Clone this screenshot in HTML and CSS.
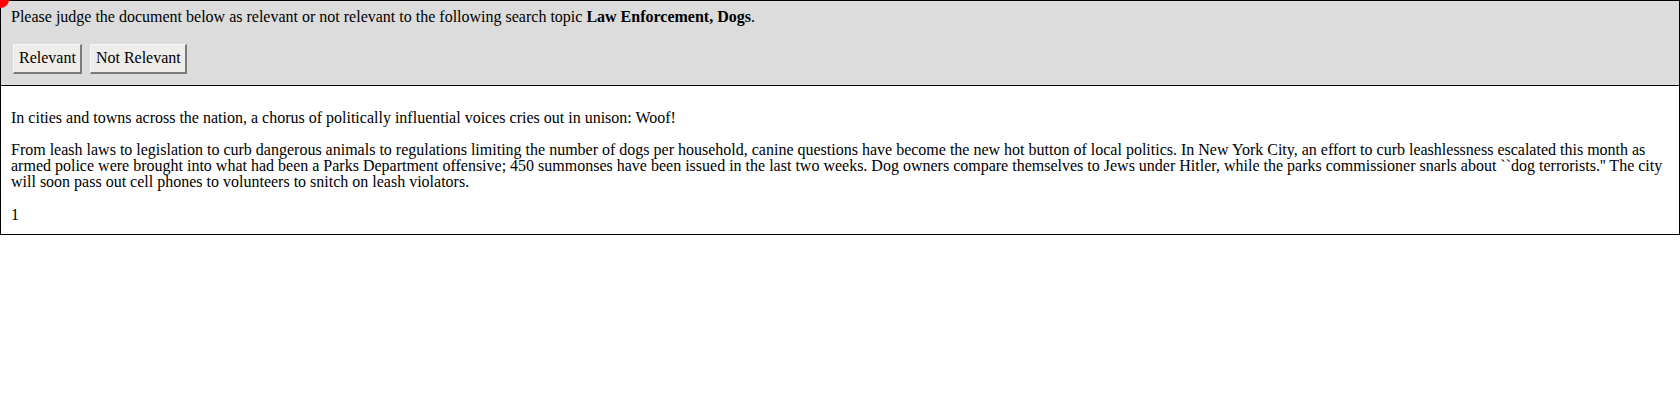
FILE: index.html
```html
<!DOCTYPE html>
<html>
<head>
<meta charset="utf-8">
<title>Relevance judgment</title>
<link rel="stylesheet" href="styles.css">
</head>
<body>
<div class="marker"></div>
<div class="judge">
  <div class="prompt">Please judge the document below as relevant or not relevant to the following search topic <b>Law Enforcement, Dogs</b>.</div>
  <div class="actions">
    <button class="btn">Relevant</button>
    <button class="btn">Not Relevant</button>
  </div>
</div>
<div class="doc">
  <p>In cities and towns across the nation, a chorus of politically influential voices cries out in unison: Woof!</p>
  <p>From leash laws to legislation to curb dangerous animals to regulations limiting the number of dogs per household, canine questions have become the new hot button of local politics. In New York City, an effort to curb leashlessness escalated this month as armed police were brought into what had been a Parks Department offensive; 450 summonses have been issued in the last two weeks. Dog owners compare themselves to Jews under Hitler, while the parks commissioner snarls about ``dog terrorists.'' The city will soon pass out cell phones to volunteers to snitch on leash violators.</p>
  <div class="pageno">1</div>
</div>
</body>
</html>
```

FILE: styles.css
```css
html, body {
  margin: 0;
  padding: 0;
  background: #ffffff;
}

body {
  font-family: "Liberation Serif", "Times New Roman", serif;
  font-size: 16px;
  line-height: 18px;
  color: #000;
  position: relative;
}

.marker {
  position: absolute;
  left: -8px;
  top: -9px;
  width: 17px;
  height: 17px;
  border-radius: 50%;
  background: #ff0000;
  z-index: 2;
}

.judge {
  background: #dcdcdc;
  border: 1px solid #000;
  border-bottom: none;
  padding: 7px 10px 11px 10px;
}

.prompt {
  margin: 0;
}

.actions {
  display: flex;
  gap: 8px;
  margin-top: 18px;
  padding-left: 2px;
}

.btn {
  font-family: "Liberation Serif", "Times New Roman", serif;
  font-size: 16px;
  line-height: 18px;
  color: #000;
  background: #efede9;
  border-style: solid;
  border-width: 1px 2px 2px 1px;
  border-color: #f8f8f8 #7a7a7a #7a7a7a #f8f8f8;
  padding: 4px 4px 5px 5px;
  margin: 0;
  border-radius: 0;
}

.doc {
  border: 1px solid #000;
  padding: 8px 10px 10px 10px;
}

.doc p {
  margin: 16px 0;
  line-height: 16px;
}

.pageno {
  line-height: 18px;
}
```
